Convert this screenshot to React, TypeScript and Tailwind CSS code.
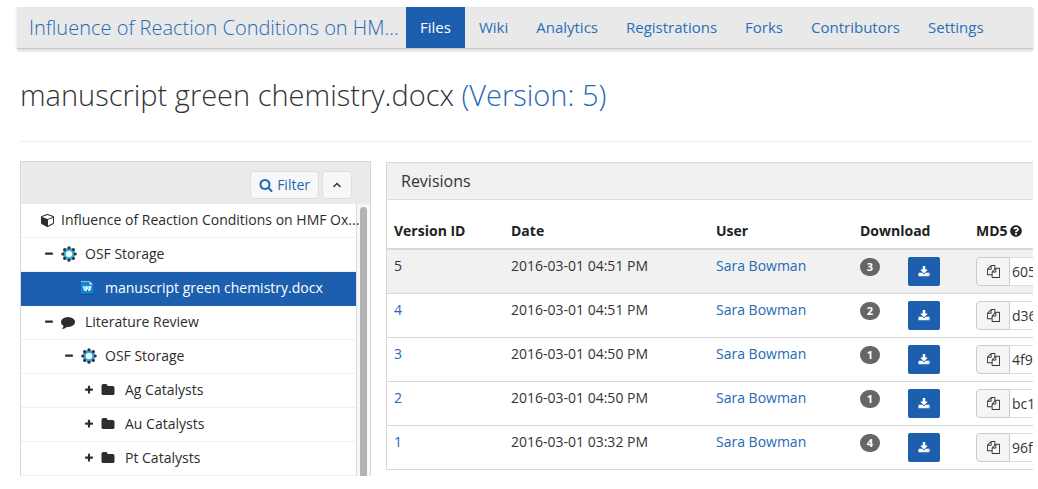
import React from "react";
import { FaQuestionCircle } from "react-icons/fa";

const GLYPHS = {
  files:
    "M1696 384q40 0 68 28t28 68v1216q0 40-28 68t-68 28h-960q-40 0-68-28t-28-68v-288h-544q-40 0-68-28t-28-68v-672q0-40 20-88t48-76l408-408q28-28 76-48t88-20h416q40 0 68 28t28 68v328q68-40 128-40h416zm-544 213l-299 299h299v-299zm-640-384l-299 299h299v-299zm196 647l316-316v-416h-384v416q0 40-28 68t-68 28h-416v640h512v-256q0-40 20-88t48-76zm956 804v-1152h-384v416q0 40-28 68t-68 28h-416v640h896z",
  cube:
    "M896 1629l640-349v-636l-640 233v752zm-64-865l698-254-698-254-698 254zm832-252v768q0 35-18 65t-49 47l-704 384q-28 16-61 16t-61-16l-704-384q-31-17-49-47t-18-65v-768q0-40 23-73t61-47l704-256q22-8 44-8t44 8l704 256q38 14 61 47t23 73z",
  download:
    "M1344 1344q0-26-19-45t-45-19-45 19-19 45 19 45 45 19 45-19 19-45zm256 0q0-26-19-45t-45-19-45 19-19 45 19 45 45 19 45-19 19-45zm128-224v320q0 40-28 68t-68 28h-1472q-40 0-68-28t-28-68v-320q0-40 28-68t68-28h465l135 136q58 56 136 56t136-56l136-136h464q40 0 68 28t28 68zm-325-569q17 41-14 70l-448 448q-18 19-45 19t-45-19l-448-448q-31-29-14-70 17-39 59-39h256v-448q0-26 19-45t45-19h256q26 0 45 19t19 45v448h256q42 0 59 39z",
  search:
    "M1216 832q0-185-131.5-316.5t-316.5-131.5-316.5 131.5-131.5 316.5 131.5 316.5 316.5 131.5 316.5-131.5 131.5-316.5zm512 832q0 52-38 90t-90 38q-54 0-90-38l-343-342q-179 124-399 124-143 0-273.5-55.5t-225-150-150-225-55.5-273.5 55.5-273.5 150-225 225-150 273.5-55.5 273.5 55.5 225 150 150 225 55.5 273.5q0 220-124 399l343 343q37 37 37 90z",
  minus:
    "M1600 736v192q0 40-28 68t-68 28h-1216q-40 0-68-28t-28-68v-192q0-40 28-68t68-28h1216q40 0 68 28t28 68z",
  plus:
    "M1600 736v192q0 40-28 68t-68 28h-416v416q0 40-28 68t-68 28h-192q-40 0-68-28t-28-68v-416h-416q-40 0-68-28t-28-68v-192q0-40 28-68t68-28h416v-416q0-40 28-68t68-28h192q40 0 68 28t28 68v416h416q40 0 68 28t28 68z",
  folder:
    "M1728 608v704q0 92-66 158t-158 66h-1216q-92 0-158-66t-66-158v-960q0-92 66-158t158-66h320q92 0 158 66t66 158v32h672q92 0 158 66t66 158z",
  comment:
    "M1792 896q0 174-120 321.5t-326 233-450 85.5q-70 0-145-8-198 175-460 242-49 14-114 22-17 2-30.5-9t-17.5-29v-1q-3-4-.5-12t2-10 4.5-9.5l6-9 7-8.5 8-9q7-8 31-34.5t34.5-38 31-39.5 32.5-51 27-59 26-76q-157-89-247.5-220t-90.5-281q0-130 71-248.5t191-204.5 286-136.5 348-50.5 348 50.5 286 136.5 191 204.5 71 248.5z",
};

type GlyphName = keyof typeof GLYPHS;

function Glyph({ name, className }: { name: GlyphName; className: string }) {
  return (
    <svg viewBox="0 0 1792 1792" fill="currentColor" aria-hidden="true" className={className}>
      <path d={GLYPHS[name]} />
    </svg>
  );
}

function OsfLogo() {
  return (
    <svg viewBox="0 0 16 16" aria-hidden="true" className="size-4">
      <circle cx="8" cy="8" r="6.2" fill="#35b0ea" />
      {[0, 45, 90, 135, 180, 225, 270, 315].map((a) => (
        <circle key={a} cx="8" cy="1.8" r="1.6" fill="#2f3338" transform={`rotate(${a} 8 8)`} />
      ))}
      <circle cx="8" cy="8" r="3.1" fill="#fff" />
    </svg>
  );
}

function WordIcon() {
  return (
    <svg viewBox="0 0 12 14" aria-hidden="true" className="h-3.5 w-3">
      <path d="M0 0h8.5L12 3.5V14H0z" fill="#1686dc" />
      <path d="M0 12.6h12V14H0z" fill="#0d4f9e" />
      <path d="M0 0h8.5v1H0z" fill="#7fc0f0" />
      <path d="M8.5 0v3.5H12z" fill="#c4e3fa" />
      <path d="M1.5 5.2h9L9 10H7.6L6.5 7.6 5.2 10H3.6z" fill="#fff" />
      <path d="M3.6 5.4l.9 2.8M6.6 5.4l1.5 2.8" stroke="#1686dc" strokeWidth=".7" />
    </svg>
  );
}

const NAV = ["Files", "Wiki", "Analytics", "Registrations", "Forks", "Contributors", "Settings"];

type Node = {
  label: string;
  indent: string;
  toggle?: "minus" | "plus";
  icon: "cube" | "osf" | "word" | "comment" | "folder";
  active?: boolean;
};

const TREE: Node[] = [
  { label: "Influence of Reaction Conditions on HMF Ox...", indent: "pl-5", icon: "cube" },
  { label: "OSF Storage", indent: "pl-4", toggle: "minus", icon: "osf" },
  { label: "manuscript green chemistry.docx", indent: "pl-[60px]", icon: "word", active: true },
  { label: "Literature Review", indent: "pl-4", toggle: "minus", icon: "comment" },
  { label: "OSF Storage", indent: "pl-9", toggle: "minus", icon: "osf" },
  { label: "Ag Catalysts", indent: "pl-14", toggle: "plus", icon: "folder" },
  { label: "Au Catalysts", indent: "pl-14", toggle: "plus", icon: "folder" },
  { label: "Pt Catalysts", indent: "pl-14", toggle: "plus", icon: "folder" },
];

const REVISIONS = [
  { id: "5", date: "2016-03-01 04:51 PM", count: 3, md5: "605", current: true },
  { id: "4", date: "2016-03-01 04:51 PM", count: 2, md5: "d36" },
  { id: "3", date: "2016-03-01 04:50 PM", count: 1, md5: "4f97" },
  { id: "2", date: "2016-03-01 04:50 PM", count: 1, md5: "bc1" },
  { id: "1", date: "2016-03-01 03:32 PM", count: 4, md5: "96f5" },
];

function TreeRow({ node }: { node: Node }) {
  return (
    <li
      className={`flex h-[34px] items-center border-b pb-[2px] ${node.indent} ${
        node.active ? "border-[#1b5fae] bg-[#1b5fae] text-white" : "border-[#f0f0f0]"
      }`}
    >
      {node.toggle && (
        <button
          type="button"
          aria-label={`${node.toggle === "minus" ? "Collapse" : "Expand"} ${node.label}`}
          className="flex w-6 shrink-0 justify-center"
        >
          <Glyph name={node.toggle} className="size-2.5" />
        </button>
      )}
      <span className={`flex shrink-0 items-center ${node.icon === "cube" ? "w-5" : "w-6"}`}>
        {node.icon === "osf" && <OsfLogo />}
        {node.icon === "word" && <WordIcon />}
        {node.icon !== "osf" && node.icon !== "word" && <Glyph name={node.icon} className="size-3.5" />}
      </span>
      <a href="#" className="whitespace-nowrap">
        {node.label}
      </a>
    </li>
  );
}

export default function App() {
  return (
    <div className="overflow-hidden pt-[7px] pr-[5px] pl-[17px] font-['Open_Sans',sans-serif] text-sm text-[#333]">
      <nav className="flex h-[42px] items-stretch border-b border-[#c8c8c8] bg-[#e9e9e9] shadow-[0_2px_3px_rgba(0,0,0,0.15)]">
        <a href="#" className="flex w-[389px] shrink-0 items-center pl-3 text-xl font-light text-[#1f69b7]">
          Influence of Reaction Conditions on HM...
        </a>
        {NAV.map((item, i) => (
          <a
            key={item}
            href="#"
            className={`flex items-center px-3.5 text-[15px] ${i === 0 ? "bg-[#1b5fae] text-white" : "text-[#2a6fb9]"}`}
          >
            {item}
          </a>
        ))}
      </nav>

      <div className="overflow-hidden pl-[3px]">
        <h1 className="border-b border-[#eee] pt-[26px] pb-[26px] text-[29px] leading-10 font-light">
          manuscript green chemistry.docx <a href="#" className="text-[#1f69b7]">(Version: 5)</a>
        </h1>

        <div className="mt-[19px] flex items-start gap-[15px]">
          <aside className="w-[351px] shrink-0 border-x border-t border-[#d8d8d8] text-[#2d2d2d]">
            <div className="flex h-[42px] items-center justify-end gap-[3px] bg-[#ebebeb] pt-[3px] pr-[18px]">
              <button
                type="button"
                className="flex h-7 items-center gap-1 rounded-sm border border-[#ddd] bg-[#f7f7f7] px-2 text-[#2369b5]"
              >
                <Glyph name="search" className="size-3.5" />
                Filter
              </button>
              <button
                type="button"
                aria-label="Collapse panel"
                className="flex h-7 w-[30px] items-center justify-center rounded-sm border border-[#ddd] bg-[#f7f7f7]"
              >
                <svg viewBox="0 0 10 6" className="h-1.5 w-2.5" fill="none" stroke="currentColor" strokeWidth="1.4" aria-hidden="true">
                  <path d="M1.5 5L5 1.5 8.5 5" />
                </svg>
              </button>
            </div>
            <div className="flex">
              <ul className="relative min-w-0 grow">
                {TREE.map((node, i) => (
                  <TreeRow key={i} node={node} />
                ))}
              </ul>
              <div className="flex w-[14px] shrink-0 justify-center border-l border-[#ddd] bg-[#f7f7f7] pt-[3px]">
                <div className="w-[7px] rounded-t-full bg-[#b3b3b3]" />
              </div>
            </div>
          </aside>

          <section className="mt-px min-w-0 grow overflow-hidden border-t border-l border-[#d8d8d8]">
            <h2 className="h-[37px] border-b border-[#ddd] bg-[#f1f1f1] pt-[6px] pl-[14px] text-base">Revisions</h2>
            <table className="w-full table-fixed border-collapse text-left">
              <colgroup>
                <col className="w-[117px]" />
                <col className="w-[205px]" />
                <col className="w-[144px]" />
                <col className="w-[48px]" />
                <col className="w-[68px]" />
                <col />
              </colgroup>
              <thead>
                <tr className="h-[49px] border-b-2 border-[#d8d8d8] align-bottom text-[#222]">
                  <th className="px-[7px] pb-[7px]">Version ID</th>
                  <th className="px-[7px] pb-[7px]">Date</th>
                  <th className="px-[7px] pb-[7px]">User</th>
                  <th colSpan={2} className="px-[7px] pb-[7px]">Download</th>
                  <th className="px-[7px] pb-[7px] whitespace-nowrap">
                    MD5<FaQuestionCircle className="ml-[2px] inline size-3 align-[-1px]" />
                  </th>
                </tr>
              </thead>
              <tbody>
                {REVISIONS.map((r) => (
                  <tr key={r.id} className={`border-b border-[#d8d8d8] align-top ${r.current ? "bg-[#f1f1f1]" : ""}`}>
                    <td className="px-[7px] pt-[6px]">
                      {r.current ? r.id : <a href="#" className="text-[#2369b5]">{r.id}</a>}
                    </td>
                    <td className="px-[7px] pt-[6px]">{r.date}</td>
                    <td className="px-[7px] pt-[6px]">
                      <a href="#" className="text-[#2369b5]">Sara Bowman</a>
                    </td>
                    <td className="px-[7px] pt-[8px]">
                      <span className="flex h-[18px] w-5 items-center justify-center rounded-full bg-[#666] text-[11px] font-bold text-white">
                        {r.count}
                      </span>
                    </td>
                    <td className="px-[7px] py-[7px]">
                      <button
                        type="button"
                        aria-label={`Download version ${r.id}`}
                        className="flex h-[29px] w-8 items-center justify-center rounded-xs bg-[#1b5fae] text-white"
                      >
                        <Glyph name="download" className="size-3" />
                      </button>
                    </td>
                    <td className="px-[7px] py-[7px]">
                      <div className="flex h-[29px] w-[200px]">
                        <button
                          type="button"
                          aria-label={`Copy MD5 of version ${r.id}`}
                          className="flex w-[34px] shrink-0 items-center justify-center rounded-l-sm border border-[#ccc] bg-[#f5f5f5]"
                        >
                          <Glyph name="files" className="size-[13px]" />
                        </button>
                        <input
                          readOnly
                          aria-label={`MD5 of version ${r.id}`}
                          defaultValue={r.md5}
                          className="min-w-0 grow border-y border-[#ddd] bg-white px-[2px]"
                        />
                      </div>
                    </td>
                  </tr>
                ))}
              </tbody>
            </table>
          </section>
        </div>
      </div>
    </div>
  );
}
